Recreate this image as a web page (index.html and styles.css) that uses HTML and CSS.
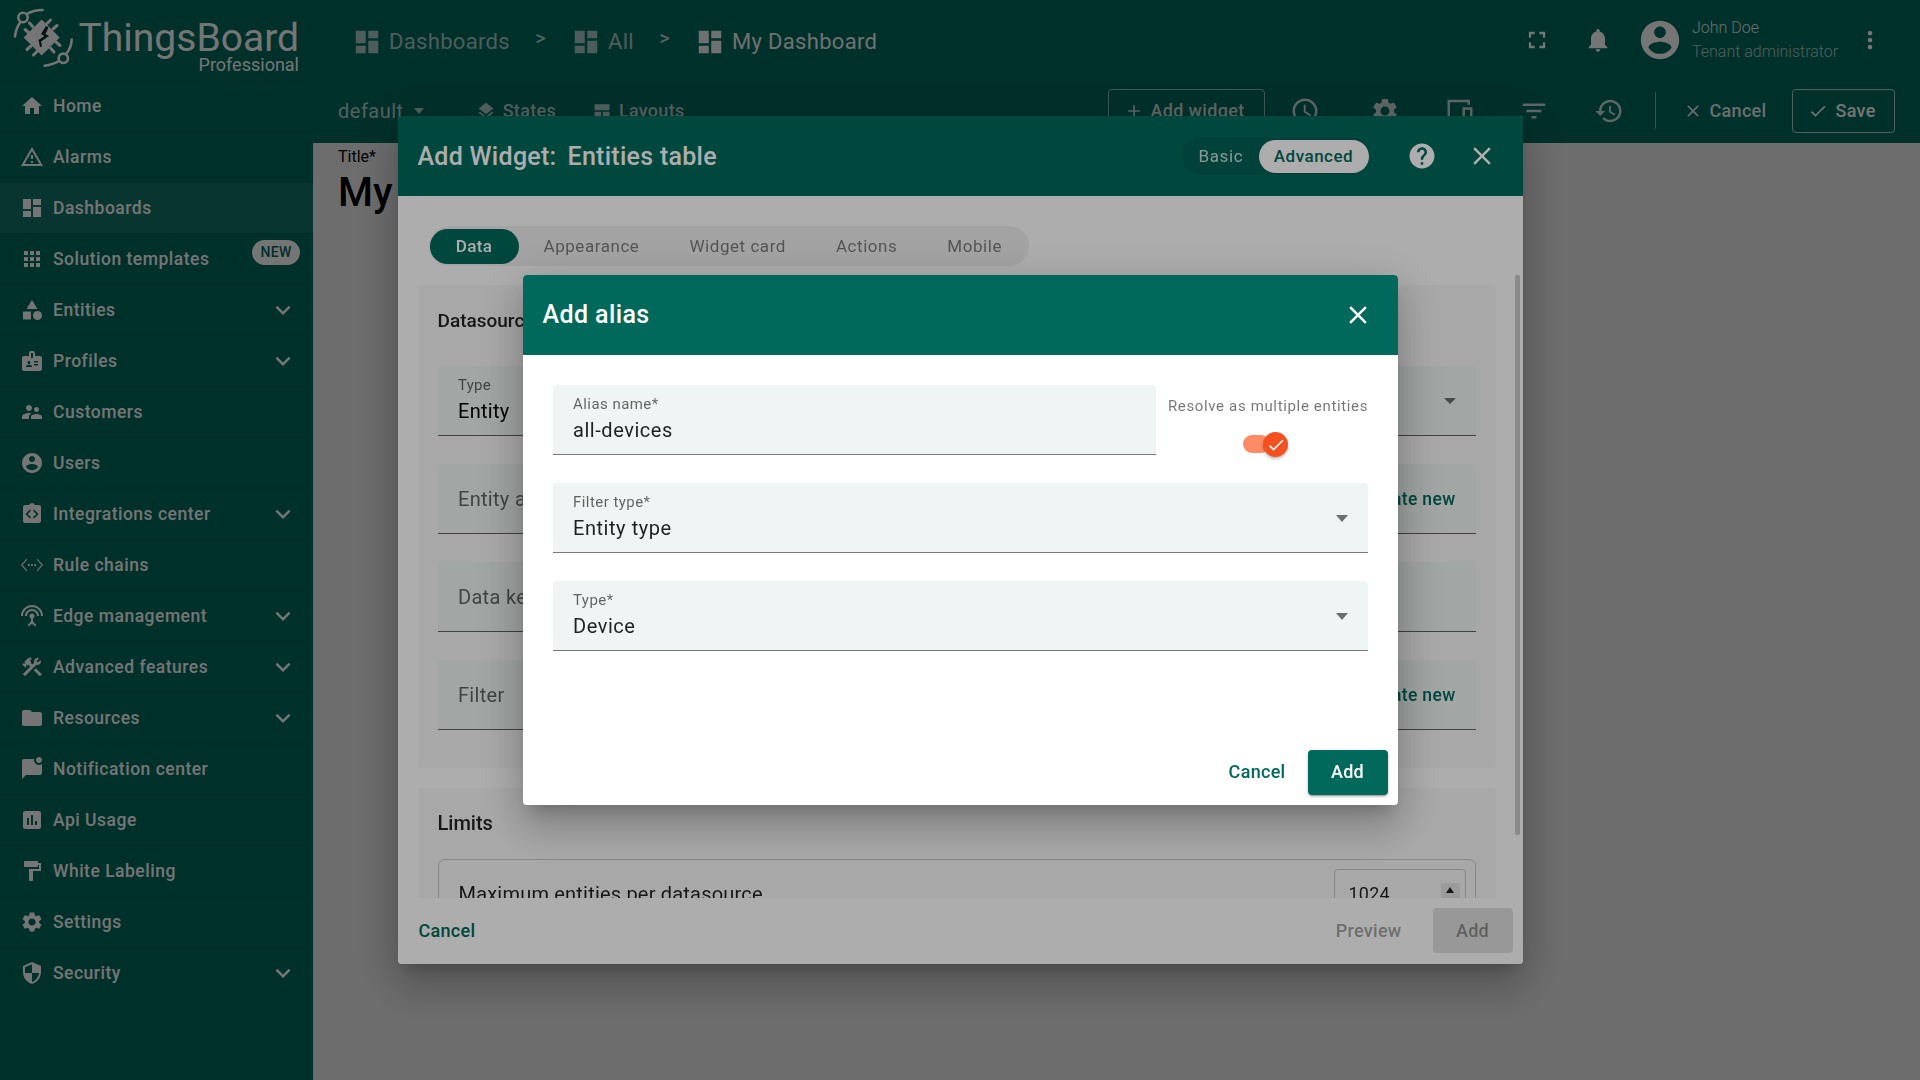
FILE: index.html
```html
<!DOCTYPE html>
<html lang="en">
<head>
<meta charset="utf-8">
<title>ThingsBoard</title>
<link rel="stylesheet" href="styles.css">
</head>
<body>
<svg class="sprite" xmlns="http://www.w3.org/2000/svg">
<symbol id="i-home" viewBox="0 0 24 24"><path d="M10 20v-6h4v6h5v-8h3L12 3 2 12h3v8z"/></symbol>
<symbol id="i-warn" viewBox="0 0 24 24"><path d="M12 5.99L19.53 19H4.47L12 5.99M12 2L1 21h22L12 2zm1 14h-2v2h2v-2zm0-6h-2v4h2v-4z"/></symbol>
<symbol id="i-dash" viewBox="0 0 24 24"><path d="M3 13h8V3H3v10zm0 8h8v-6H3v6zm10 0h8V11h-8v10zm0-18v6h8V3h-8z"/></symbol>
<symbol id="i-grid" viewBox="0 0 24 24"><path d="M4 4h4v4H4zM10 4h4v4h-4zM16 4h4v4h-4zM4 10h4v4H4zM10 10h4v4h-4zM16 10h4v4h-4zM4 16h4v4H4zM10 16h4v4h-4zM16 16h4v4h-4z"/></symbol>
<symbol id="i-cat" viewBox="0 0 24 24"><path d="M12 2l-5.5 9h11z"/><circle cx="17.5" cy="17.5" r="4.5"/><path d="M3 13.5h8v8H3z"/></symbol>
<symbol id="i-badge" viewBox="0 0 24 24"><path d="M20 7h-5V4c0-1.1-.9-2-2-2h-2c-1.1 0-2 .9-2 2v3H4c-1.1 0-2 .9-2 2v11c0 1.1.9 2 2 2h16c1.1 0 2-.9 2-2V9c0-1.1-.9-2-2-2zM9 12c.83 0 1.5.67 1.5 1.5S9.83 15 9 15s-1.5-.67-1.5-1.5S8.17 12 9 12zm3 6H6v-.75c0-1 2-1.5 3-1.5s3 .5 3 1.5V18zm1-9h-2V4h2v5zm5 7.5h-4V15h4v1.5zm0-3h-4V12h4v1.5z"/></symbol>
<symbol id="i-people" viewBox="0 0 24 24"><path d="M16.5 12c1.38 0 2.49-1.12 2.49-2.5S17.88 7 16.5 7 14 8.12 14 9.5s1.12 2.5 2.5 2.5zM9 11c1.66 0 2.99-1.34 2.99-3S10.66 5 9 5 6 6.34 6 8s1.34 3 3 3zm7.5 3c-1.83 0-5.5.92-5.5 2.75V19h11v-2.25c0-1.83-3.67-2.75-5.5-2.75zM9 13c-2.33 0-7 1.17-7 3.5V19h7v-2.25c0-.85.33-2.34 2.37-3.47C10.5 13.1 9.66 13 9 13z"/></symbol>
<symbol id="i-user" viewBox="0 0 24 24"><path d="M12 2C6.48 2 2 6.48 2 12s4.48 10 10 10 10-4.48 10-10S17.52 2 12 2zm0 3c1.66 0 3 1.34 3 3s-1.34 3-3 3-3-1.34-3-3 1.34-3 3-3zm0 14.2c-2.5 0-4.71-1.28-6-3.22.03-1.99 4-3.08 6-3.08 1.99 0 5.97 1.09 6 3.08-1.29 1.94-3.5 3.22-6 3.22z"/></symbol>
<symbol id="i-integ" viewBox="0 0 24 24"><path fill-rule="evenodd" d="M5 3h4.2C9.6 1.8 10.7 1 12 1s2.400.8 2.800 2H19c1.100 0 2 .9 2 2v14c0 1.100-.9 2-2 2H5c-1.100 0-2-.9-2-2V5c0-1.100.9-2 2-2zM11 8.700L9.900 7.600 5.500 12l4.400 4.400 1.100-1.100L7.700 12zM13 8.700l1.100-1.100 4.400 4.400-4.400 4.400-1.100-1.100 3.300-3.300z"/></symbol>
<symbol id="i-eth" viewBox="0 0 24 24"><path d="M7.300 6.400L6.500 5.700 1 12l5.500 6.300.8-.7L2.500 12zM8 11h1.600v2H8zM11.200 11h1.600v2h-1.600zM14.400 11H16v2h-1.600zM16.700 6.400l.8-.7L23 12l-5.500 6.300-.8-.7 4.800-5.600z"/></symbol>
<symbol id="i-ant" viewBox="0 0 24 24"><path d="M12 5c-3.870 0-7 3.130-7 7h2c0-2.760 2.240-5 5-5s5 2.240 5 5h2c0-3.870-3.130-7-7-7zm1 9.290c.88-.39 1.500-1.260 1.500-2.290 0-1.380-1.120-2.500-2.500-2.500S9.500 10.620 9.500 12c0 1.020.62 1.900 1.500 2.290v3.300L7.590 21 9 22.410l3-3 3 3L16.410 21 13 17.590v-3.300zM12 1C5.930 1 1 5.930 1 12h2c0-4.970 4.030-9 9-9s9 4.030 9 9h2c0-6.070-4.930-11-11-11z"/></symbol>
<symbol id="i-tools" viewBox="0 0 24 24"><path d="M13.780 15.300l6 6 2.110-2.160-6-6zM17.500 10c1.930 0 3.500-1.570 3.500-3.500 0-.58-.16-1.120-.41-1.600l-2.700 2.700-1.490-1.490 2.700-2.700c-.48-.25-1.020-.41-1.600-.41C15.570 3 14 4.570 14 6.500c0 .41.08.8.21 1.160l-1.850 1.850-1.780-1.780.71-.71-1.410-1.410L12 3.490c-1.170-1.170-3.070-1.170-4.240 0L4.220 7.030l1.410 1.410H2.810l-.71.71 3.540 3.540.71-.71V9.150l1.410 1.410.71-.71 1.780 1.780-7.410 7.410 2.120 2.120L16.340 9.790c.36.13.75.21 1.160.21z"/></symbol>
<symbol id="i-folder" viewBox="0 0 24 24"><path d="M10 4H4c-1.100 0-1.990.9-1.990 2L2 18c0 1.100.9 2 2 2h16c1.100 0 2-.9 2-2V8c0-1.100-.9-2-2-2h-8l-2-2z"/></symbol>
<symbol id="i-chat" viewBox="0 0 24 24"><path d="M22 6.980V16c0 1.100-.9 2-2 2H6l-4 4V4c0-1.100.9-2 2-2h10.100c-.06.32-.1.66-.1 1 0 2.760 2.240 5 5 5 1.130 0 2.160-.39 3-1.020zM16 3c0 1.660 1.340 3 3 3s3-1.340 3-3-1.340-3-3-3-3 1.340-3 3z"/></symbol>
<symbol id="i-chart" viewBox="0 0 24 24"><path d="M19 3H5c-1.100 0-2 .9-2 2v14c0 1.100.9 2 2 2h14c1.100 0 2-.9 2-2V5c0-1.100-.9-2-2-2zM9 17H7v-7h2v7zm4 0h-2V7h2v10zm4 0h-2v-4h2v4z"/></symbol>
<symbol id="i-paint" viewBox="0 0 24 24"><path d="M18 4V3c0-.55-.45-1-1-1H5c-.55 0-1 .45-1 1v4c0 .55.45 1 1 1h12c.55 0 1-.45 1-1V6h1v4H9v11c0 .55.45 1 1 1h2c.55 0 1-.45 1-1v-9h8V4h-3z"/></symbol>
<symbol id="i-gear" viewBox="0 0 24 24"><path d="M19.140 12.940c.04-.3.06-.61.06-.94 0-.32-.02-.64-.07-.94l2.030-1.580c.18-.14.23-.41.12-.61l-1.920-3.320c-.12-.22-.37-.29-.59-.22l-2.390.96c-.5-.38-1.030-.7-1.620-.94l-.36-2.540c-.04-.24-.24-.41-.48-.41h-3.840c-.24 0-.43.17-.47.41l-.36 2.540c-.59.24-1.130.57-1.620.94l-2.390-.96c-.22-.08-.47 0-.59.22L2.740 8.870c-.12.21-.08.47.12.61l2.030 1.580c-.05.3-.09.63-.09.94s.02.64.07.94l-2.030 1.580c-.18.14-.23.41-.12.61l1.920 3.320c.12.22.37.29.59.22l2.390-.96c.5.38 1.030.7 1.620.94l.36 2.540c.05.24.24.41.48.41h3.840c.24 0 .44-.17.47-.41l.36-2.540c.59-.24 1.130-.56 1.620-.94l2.390.96c.22.08.47 0 .59-.22l1.920-3.320c.12-.22.07-.47-.12-.61l-2.010-1.580zM12 15.600c-1.980 0-3.600-1.620-3.600-3.600s1.620-3.600 3.600-3.600 3.600 1.620 3.600 3.600-1.620 3.600-3.600 3.600z"/></symbol>
<symbol id="i-shield" viewBox="0 0 24 24"><path d="M12 1L3 5v6c0 5.550 3.840 10.740 9 12 5.160-1.260 9-6.450 9-12V5l-9-4zm0 10.990h7c-.53 4.120-3.280 7.790-7 8.940V12H5V6.300l7-3.110v8.800z"/></symbol>
<symbol id="i-more" viewBox="0 0 24 24"><path d="M16.590 8.590L12 13.170 7.410 8.590 6 10l6 6 6-6z"/></symbol>
<symbol id="i-full" viewBox="0 0 24 24"><path d="M7 14H5v5h5v-2H7v-3zm-2-4h2V7h3V5H5v5zm12 7h-3v2h5v-5h-2v3zM14 5v2h3v3h2V5h-5z"/></symbol>
<symbol id="i-bell" viewBox="0 0 24 24"><path d="M12 22c1.100 0 2-.9 2-2h-4c0 1.100.89 2 2 2zm6-6v-5c0-3.070-1.640-5.640-4.500-6.320V4c0-.83-.67-1.500-1.500-1.500s-1.500.67-1.500 1.500v.68C7.630 5.360 6 7.920 6 11v5l-2 2v1h16v-1l-2-2z"/></symbol>
<symbol id="i-vert" viewBox="0 0 24 24"><path d="M12 8c1.100 0 2-.9 2-2s-.9-2-2-2-2 .9-2 2 .9 2 2 2zm0 2c-1.100 0-2 .9-2 2s.9 2 2 2 2-.9 2-2-.9-2-2-2zm0 6c-1.100 0-2 .9-2 2s.9 2 2 2 2-.9 2-2-.9-2-2-2z"/></symbol>
<symbol id="i-layers" viewBox="0 0 24 24"><path d="M11.990 18.540l-7.370-5.730L3 14.070l9 7 9-7-1.630-1.270-7.380 5.740zM12 16l7.360-5.730L21 9l-9-7-9 7 1.630 1.270L12 16z"/></symbol>
<symbol id="i-layout" viewBox="0 0 24 24"><path d="M3 4h18v7H3zM3 13h8v7H3zM13 13h8v7h-8z"/></symbol>
<symbol id="i-add" viewBox="0 0 24 24"><path d="M19 13h-6v6h-2v-6H5v-2h6V5h2v6h6v2z"/></symbol>
<symbol id="i-clock" viewBox="0 0 24 24"><path d="M11.990 2C6.470 2 2 6.480 2 12s4.470 10 9.990 10C17.520 22 22 17.520 22 12S17.520 2 11.990 2zM12 20c-4.420 0-8-3.580-8-8s3.580-8 8-8 8 3.580 8 8-3.580 8-8 8zm.5-13H11v6l5.250 3.150.75-1.230-4.500-2.670z"/></symbol>
<symbol id="i-screen" viewBox="0 0 24 24"><path fill-rule="evenodd" d="M2 3h18v4h-2V5H4v16H2zM14 9h8v12h-8zM16 11v8h4v-8zM8 21l2.500-5 2 3v2z"/></symbol>
<symbol id="i-filter" viewBox="0 0 24 24"><path d="M10 18h4v-2h-4v2zM3 6v2h18V6H3zm3 7h12v-2H6v2z"/></symbol>
<symbol id="i-history" viewBox="0 0 24 24"><path d="M13 3c-4.970 0-9 4.030-9 9H1l3.890 3.890.07.14L9 12H6c0-3.870 3.130-7 7-7s7 3.130 7 7-3.130 7-7 7c-1.930 0-3.680-.79-4.940-2.060l-1.420 1.420C8.270 19.990 10.510 21 13 21c4.970 0 9-4.030 9-9s-4.030-9-9-9zm-1 5v5l4.280 2.540.72-1.210-3.500-2.080V8H12z"/></symbol>
<symbol id="i-close" viewBox="0 0 24 24"><path d="M19 6.410L17.590 5 12 10.590 6.410 5 5 6.410 10.590 12 5 17.590 6.410 19 12 13.410 17.590 19 19 17.590 13.410 12z"/></symbol>
<symbol id="i-check" viewBox="0 0 24 24"><path d="M9 16.170L4.830 12l-1.420 1.410L9 19 21 7l-1.410-1.410z"/></symbol>
<symbol id="i-help" viewBox="0 0 24 24"><path d="M12 2C6.480 2 2 6.480 2 12s4.480 10 10 10 10-4.480 10-10S17.520 2 12 2zm1 17h-2v-2h2v2zm2.070-7.750l-.9.92C13.450 12.900 13 13.500 13 15h-2v-.5c0-1.100.45-2.100 1.170-2.830l1.240-1.260c.37-.36.59-.86.59-1.410 0-1.100-.9-2-2-2s-2 .9-2 2H8c0-2.210 1.790-4 4-4s4 1.790 4 4c0 .88-.36 1.680-.93 2.250z"/></symbol>
</svg>

<div class="app">
  <aside class="sidebar">
    <div class="brand">
      <svg class="logo" viewBox="0 0 80 80" aria-hidden="true">
        <g fill="none" stroke="currentColor" stroke-width="2.600" stroke-linecap="round">
          <circle cx="23" cy="17.500" r="4.700"/>
          <path d="M27 14C31 11.500 37 10 42.500 10M20.500 22C17.500 26 15.500 31 15 36.500"/>
          <circle cx="63.300" cy="58.300" r="4.700"/>
          <path d="M59 61C55 63.500 50 65 44.500 65.700M66 54C69.500 50 71.500 45 71.700 39.500"/>
          <path stroke-width="3" d="M29 33l-4-3.500M33 27l-3.500-4M47 23.500l3.500-3.500M53 29l4-3.500M56 42l4 3.500M50.500 48l3.500 4M37 51.500L33.500 55M31 46l-4 3.500"/>
        </g>
        <path fill="currentColor" d="M41.700 19.500l18 18-18 18-18-18z"/>
        <path fill="#00302a" d="M46 26l-5 8 3.500 2-6 4 1.500 7 2-.5-1-5 8-5.500-3.500-2 3-6.500z"/>
      </svg>
      <div class="brand-text">
        <span class="brand-name">ThingsBoard</span>
        <span class="brand-sub">Professional</span>
      </div>
    </div>
    <nav class="nav">
      <a class="nav-item"><svg class="nav-icon"><use href="#i-home"/></svg><span>Home</span></a>
      <a class="nav-item"><svg class="nav-icon"><use href="#i-warn"/></svg><span>Alarms</span></a>
      <a class="nav-item is-active"><svg class="nav-icon"><use href="#i-dash"/></svg><span>Dashboards</span></a>
      <a class="nav-item"><svg class="nav-icon"><use href="#i-grid"/></svg><span>Solution templates</span><b class="new-badge">NEW</b></a>
      <a class="nav-item"><svg class="nav-icon"><use href="#i-cat"/></svg><span>Entities</span><svg class="nav-chev"><use href="#i-more"/></svg></a>
      <a class="nav-item"><svg class="nav-icon"><use href="#i-badge"/></svg><span>Profiles</span><svg class="nav-chev"><use href="#i-more"/></svg></a>
      <a class="nav-item"><svg class="nav-icon"><use href="#i-people"/></svg><span>Customers</span></a>
      <a class="nav-item"><svg class="nav-icon"><use href="#i-user"/></svg><span>Users</span></a>
      <a class="nav-item"><svg class="nav-icon"><use href="#i-integ"/></svg><span>Integrations center</span><svg class="nav-chev"><use href="#i-more"/></svg></a>
      <a class="nav-item"><svg class="nav-icon"><use href="#i-eth"/></svg><span>Rule chains</span></a>
      <a class="nav-item"><svg class="nav-icon"><use href="#i-ant"/></svg><span>Edge management</span><svg class="nav-chev"><use href="#i-more"/></svg></a>
      <a class="nav-item"><svg class="nav-icon"><use href="#i-tools"/></svg><span>Advanced features</span><svg class="nav-chev"><use href="#i-more"/></svg></a>
      <a class="nav-item"><svg class="nav-icon"><use href="#i-folder"/></svg><span>Resources</span><svg class="nav-chev"><use href="#i-more"/></svg></a>
      <a class="nav-item"><svg class="nav-icon"><use href="#i-chat"/></svg><span>Notification center</span></a>
      <a class="nav-item"><svg class="nav-icon"><use href="#i-chart"/></svg><span>Api Usage</span></a>
      <a class="nav-item"><svg class="nav-icon"><use href="#i-paint"/></svg><span>White Labeling</span></a>
      <a class="nav-item"><svg class="nav-icon"><use href="#i-gear"/></svg><span>Settings</span></a>
      <a class="nav-item"><svg class="nav-icon"><use href="#i-shield"/></svg><span>Security</span><svg class="nav-chev"><use href="#i-more"/></svg></a>
    </nav>
  </aside>

  <main class="main">
    <header class="toolbar">
      <div class="top-row">
        <div class="crumb"><svg class="crumb-icon"><use href="#i-dash"/></svg><span>Dashboards</span></div>
        <span class="crumb-sep">&gt;</span>
        <div class="crumb"><svg class="crumb-icon"><use href="#i-dash"/></svg><span>All</span></div>
        <span class="crumb-sep">&gt;</span>
        <div class="crumb is-last"><svg class="crumb-icon"><use href="#i-dash"/></svg><span>My Dashboard</span></div>
        <div class="top-actions">
          <svg class="top-icon full"><use href="#i-full"/></svg>
          <svg class="top-icon bell"><use href="#i-bell"/></svg>
          <svg class="avatar"><use href="#i-user"/></svg>
          <div class="user"><span>John Doe</span><span>Tenant administrator</span></div>
          <svg class="top-icon kebab"><use href="#i-vert"/></svg>
        </div>
      </div>
      <div class="sub-row">
        <span class="state-name">default</span><span class="caret dim"></span>
        <span class="sub-link states"><svg class="sub-icon"><use href="#i-layers"/></svg>States</span>
        <span class="sub-link layouts"><svg class="sub-icon"><use href="#i-layout"/></svg>Layouts</span>
        <button class="stroked add-widget"><svg class="sub-icon"><use href="#i-add"/></svg>Add widget</button>
        <svg class="tool-icon clock"><use href="#i-clock"/></svg>
        <svg class="tool-icon gear"><use href="#i-gear"/></svg>
        <svg class="tool-icon"><use href="#i-screen"/></svg>
        <svg class="tool-icon filter"><use href="#i-filter"/></svg>
        <svg class="tool-icon"><use href="#i-history"/></svg>
        <span class="vdiv"></span>
        <span class="sub-link cancel"><svg class="sub-icon"><use href="#i-close"/></svg>Cancel</span>
        <button class="stroked save"><svg class="sub-icon"><use href="#i-check"/></svg>Save</button>
      </div>
    </header>
    <section class="canvas">
      <div class="title-label">Title*</div>
      <div class="title-value">My Dashboard</div>
    </section>
  </main>
</div>

<div class="backdrop">
  <section class="dialog widget-dialog">
    <header class="dialog-head">
      <h2 class="widget-title">Add Widget:<span>Entities table</span></h2>
      <div class="mode-toggle"><span class="mode">Basic</span><span class="mode is-on">Advanced</span></div>
      <svg class="head-help"><use href="#i-help"/></svg>
      <svg class="head-close"><use href="#i-close"/></svg>
    </header>
    <div class="widget-body">
      <div class="scrollbar"></div>
      <div class="tabs">
        <span class="tab is-on">Data</span><span class="tab">Appearance</span><span class="tab">Widget card</span><span class="tab">Actions</span><span class="tab">Mobile</span>
      </div>
      <div class="card">
        <h3 class="card-title">Datasources</h3>
        <div class="bg-field"><small>Type</small><em>Entity</em><i class="caret"></i></div>
        <div class="bg-field single"><em class="muted">Entity alias</em><strong>Create new</strong></div>
        <div class="bg-field single"><em class="muted">Data keys</em></div>
        <div class="bg-field single"><em class="muted">Filter</em><strong>Create new</strong></div>
      </div>
      <div class="card limits">
        <h3 class="card-title">Limits</h3>
        <div class="limit-box">
          <span>Maximum entities per datasource</span>
          <div class="num-input">1024<i class="spin"></i></div>
        </div>
      </div>
    </div>
    <footer class="widget-foot">
      <span class="link-strong">Cancel</span>
      <span class="link-off">Preview</span>
      <span class="btn-off">Add</span>
    </footer>
  </section>
</div>

<div class="backdrop">
  <section class="dialog alias-dialog">
    <header class="alias-head">
      <h2>Add alias</h2>
      <svg class="alias-close"><use href="#i-close"/></svg>
    </header>
    <div class="alias-body">
      <div class="alias-row">
        <label class="field grow"><small>Alias name*</small><span>all-devices</span></label>
        <div class="resolve">
          <span class="resolve-label">Resolve as multiple entities</span>
          <div class="switch"><i class="switch-thumb"><svg><use href="#i-check"/></svg></i></div>
        </div>
      </div>
      <label class="field"><small>Filter type*</small><span>Entity type</span><i class="caret"></i></label>
      <label class="field"><small>Type*</small><span>Device</span><i class="caret"></i></label>
    </div>
    <footer class="alias-foot">
      <span class="alias-cancel">Cancel</span>
      <span class="alias-add">Add</span>
    </footer>
  </section>
</div>
</body>
</html>
```
FILE: styles.css
```css
* { box-sizing: border-box; }
html, body { margin: 0; height: 100%; overflow: hidden; }
body { font-family: Roboto, "Liberation Sans", sans-serif; color: #000; background: #eee; }
.sprite { display: none; }
svg { fill: currentColor; display: block; flex: none; }
h2, h3 { margin: 0; }

.app { display: flex; height: 1080px; }
.sidebar { width: 313px; flex: none; background: #00695c; color: #fff; }
.brand { height: 80px; display: flex; }
.logo { width: 80px; height: 80px; }
.brand-text { display: flex; flex-direction: column; align-items: flex-end; width: 219px; }
.brand-name { font-size: 39px; line-height: 36px; margin-top: 20px; white-space: nowrap; }
.brand-sub { font-size: 18px; line-height: 18px; }
.nav-item { position: relative; height: 51px; display: flex; align-items: center; padding-left: 20px; border-top: 1px solid rgba(0,0,0,.08); font-size: 17.500px; font-weight: 500; letter-spacing: .5px; }
.nav-item.is-active { background: rgba(255,255,255,.08); }
.nav-icon { width: 24px; height: 24px; margin-right: 9px; }
.nav-chev { width: 30px; height: 30px; position: absolute; left: 268px; top: 10px; }
.new-badge { position: absolute; left: 252px; top: 6px; width: 48px; height: 25px; border-radius: 13px; background: #fff; color: #00695c; font-size: 14px; font-weight: 500; line-height: 25px; text-align: center; letter-spacing: .3px; }

.main { flex: 1; display: flex; flex-direction: column; min-width: 0; }
.toolbar { height: 143px; flex: none; background: #00695c; color: #fff; }
.top-row { height: 80px; display: flex; align-items: center; padding-left: 39px; }
.crumb { display: flex; align-items: center; opacity: .65; font-size: 22px; letter-spacing: .32px; margin-top: 3px; }
.crumb.is-last { opacity: .95; }
.crumb-icon { width: 30px; height: 30px; margin-right: 7px; }
.crumb-sep { opacity: .8; font-size: 20px; width: 61px; text-align: center; margin-top: -4px; }
.top-actions { margin-left: auto; display: flex; align-items: center; }
.top-icon { width: 28px; height: 28px; margin-right: 32px; }
.top-icon.full { margin-right: 33px; }
.avatar { width: 46px; height: 46px; margin-left: -6.500px; margin-right: 9px; }
.user { display: flex; flex-direction: column; font-size: 16px; font-weight: 300; line-height: 24px; width: 164px; opacity: .9; }
.user span + span { opacity: .75; }
.kebab { margin-right: 36px; }
.sub-row { height: 63px; display: flex; align-items: center; padding-left: 25px; margin-top: -1px; }
.state-name { font-size: 20px; letter-spacing: .5px; opacity: .7; }
.caret { display: block; width: 0; height: 0; border: 5.500px solid transparent; border-top: 6px solid currentColor; border-bottom: 0; }
.caret.dim { margin-left: 10px; opacity: .7; }
.sub-link { display: flex; align-items: center; font-size: 18px; font-weight: 500; letter-spacing: .3px; opacity: .7; }
.sub-icon { width: 20px; height: 20px; margin-right: 7px; }
.states { margin-left: 52px; }
.layouts { margin-left: 36px; }
.stroked { display: flex; align-items: center; height: 44px; background: none; color: #fff; font: 500 18px Roboto, sans-serif; letter-spacing: .35px; border: 1px solid rgba(255,255,255,.7); border-radius: 4px; }
.add-widget { width: 157px; padding: 0 0 0 15px; margin-left: 423px; opacity: .8; }
.tool-icon { width: 30px; height: 30px; margin-left: 45px; opacity: .8; }
.clock { margin-left: 25px; }
.gear { margin-left: 50px; }
.filter { margin-left: 44px; }
.vdiv { width: 1px; height: 37px; background: rgba(255,255,255,.5); margin-left: 31px; }
.cancel { margin-left: 27px; opacity: .9; }
.save { width: 103px; padding: 0 0 0 15px; margin-left: 26px; }
.canvas { flex: 1; padding: 5px 0 0 25px; position: relative; }
.title-label { font-size: 16px; line-height: 18px; }
.title-value { font-size: 40px; font-weight: 500; line-height: 48px; margin-top: 3px; }

.backdrop { position: fixed; inset: 0; background: rgba(0,0,0,.32); display: flex; align-items: center; justify-content: center; }
.dialog { background: #fff; border-radius: 4px; overflow: hidden; display: flex; flex-direction: column; box-shadow: 0 11px 15px -7px rgba(0,0,0,.2), 0 24px 38px 3px rgba(0,0,0,.14), 0 9px 46px 8px rgba(0,0,0,.12); }

.widget-dialog { width: 1125px; height: 848px; }
.dialog-head { height: 80px; flex: none; background: #00695c; color: #fff; display: flex; align-items: center; padding: 0 0 0 20px; }
.widget-title { font-size: 25px; font-weight: 500; letter-spacing: .28px; white-space: nowrap; flex: 1; }
.widget-title span { margin-left: 11px; }
.mode-toggle { display: flex; align-items: center; flex: none; height: 38px; width: 187px; border-radius: 19px; background: rgba(0,0,0,.08); }
.mode { font-size: 17px; font-weight: 400; letter-spacing: .6px; padding: 0 0 0 17px; opacity: .8; }
.mode.is-on { flex: none; width: 110px; height: 33px; background: #fff; color: #00695c; border-radius: 17px; line-height: 33px; opacity: 1; text-align: center; padding: 0; margin-left: auto; font-weight: 500; letter-spacing: .5px; }
.head-help { width: 30px; height: 30px; margin-left: 38px; }
.head-close { width: 30px; height: 30px; margin: 0 26px 0 30px; }
.widget-body { overflow: hidden; position: relative; padding: 30px 27px 0 20px; height: 702px; flex: none; }
.scrollbar { position: absolute; right: 3px; top: 79px; width: 5px; height: 560px; border-radius: 2px; background: rgba(0,0,0,.2); }
.tabs { display: flex; align-items: center; margin-left: 11px; width: 600px; height: 40px; padding-left: 1px; border-radius: 20px; background: rgba(0,0,0,.06); font-size: 17px; font-weight: 400; letter-spacing: .55px; color: rgba(0,0,0,.5); }
.tab { padding: 0 25px; line-height: 35px; white-space: nowrap; }
.tab.is-on { flex: none; width: 89px; background: #00695c; color: #fff; border-radius: 18px; text-align: center; padding: 0; font-weight: 500; letter-spacing: .35px; }
.card { background: rgba(0,0,0,.03); border-radius: 4px; padding: 0 20px; margin-top: 19px; height: 483px; }
.card-title { font-size: 19px; font-weight: 500; line-height: 24px; padding-top: 24px; height: 81px; color: rgba(0,0,0,.87); }
.bg-field { position: relative; height: 70px; margin-bottom: 28px; background: #eff5f4; border-bottom: 1px solid rgba(0,0,0,.6); border-radius: 4px 4px 0 0; padding: 10px 20.500px 0; display: flex; flex-direction: column; }
.bg-field small { font-size: 15px; color: rgba(0,0,0,.6); line-height: 18px; letter-spacing: .25px; }
.bg-field em { font-style: normal; font-size: 20px; line-height: 32px; letter-spacing: .3px; margin-top: 1px; }
.bg-field .caret { position: absolute; right: 20px; top: 32px; color: rgba(0,0,0,.55); border-width: 6px 6.500px 0; }
.bg-field.single { justify-content: center; padding-top: 1px; }
.bg-field em.muted { color: rgba(0,0,0,.6); margin-top: 0; }
.bg-field strong { position: absolute; right: 20px; top: 25px; font-size: 17.500px; font-weight: 500; color: #00695c; letter-spacing: .35px; }
.limits { height: auto; margin-top: 20px; padding-bottom: 30px; }
.limits .card-title { height: 71px; padding-top: 23px; font-size: 20px; }
.limit-box { display: flex; align-items: flex-start; justify-content: space-between; border: 1px solid rgba(0,0,0,.2); border-radius: 7px; padding: 9px 9px 20px 20px; height: 100px; font-size: 20px; letter-spacing: .2px; color: rgba(0,0,0,.87); }
.limit-box span { margin-top: 13px; }
.num-input { position: relative; width: 132px; height: 50px; padding: 13px 0 0 14px; border: 1px solid rgba(0,0,0,.2); border-radius: 4px; font-size: 18px; }
.spin { position: absolute; right: 5px; top: 13px; width: 19px; height: 30px; background: rgba(0,0,0,.08); }
.spin::before { content: ""; position: absolute; left: 5px; top: 4px; border: 4.500px solid transparent; border-bottom: 6px solid #222; border-top: 0; }
.spin::after { content: ""; position: absolute; left: 5px; top: 15px; width: 9px; height: 2px; background: #222; }
.widget-foot { height: 66px; flex: none; display: flex; align-items: center; padding: 0 10px 2px 21px; background: #fff; font-size: 18px; font-weight: 500; letter-spacing: .3px; }
.link-strong { color: #00695c; }
.link-off { margin-left: auto; color: rgba(0,0,0,.38); }
.btn-off { margin-left: 31px; width: 80px; height: 45px; line-height: 45px; text-align: center; background: rgba(0,0,0,.12); color: rgba(0,0,0,.38); border-radius: 4px; }

.alias-dialog { width: 875px; height: 530px; }
.alias-head { height: 80px; flex: none; background: #00695c; color: #fff; display: flex; align-items: center; justify-content: space-between; padding: 0 25px 0 20px; }
.alias-head h2 { font-size: 25px; font-weight: 500; letter-spacing: .4px; padding-bottom: 2px; }
.alias-close { width: 30px; height: 30px; }
.alias-body { flex: 1; padding: 30px 30px 0; display: flex; flex-direction: column; gap: 28px; }
.alias-row { display: flex; }
.field { position: relative; display: flex; flex-direction: column; height: 70px; padding: 10px 20.500px 0; background: #eff5f4; border-bottom: 1px solid rgba(0,0,0,.5); border-radius: 4px 4px 0 0; }
.field.grow { flex: 1; }
.field small { font-size: 15px; line-height: 18px; letter-spacing: .45px; color: rgba(0,0,0,.6); }
.field span { font-size: 20px; line-height: 32px; margin-top: 1px; letter-spacing: .55px; color: rgba(0,0,0,.87); }
.field .caret { position: absolute; right: 20px; top: 32px; color: rgba(0,0,0,.55); border-width: 7px 6.500px 0; }
.resolve { width: 212px; flex: none; display: flex; flex-direction: column; align-items: center; padding-left: 13px; padding-top: 12px; }
.resolve-label { font-size: 15px; letter-spacing: .65px; color: rgba(0,0,0,.54); line-height: 18px; white-space: nowrap; }
.switch { position: relative; width: 27px; height: 18px; margin: 20px 23px 0 0; border-radius: 9px; background: #ff8a65; }
.switch-thumb { position: absolute; left: 20px; top: -3px; width: 25px; height: 25px; border-radius: 50%; background: #f4511e; color: #fff; display: flex; align-items: center; justify-content: center; box-shadow: 0 2px 3px rgba(0,0,0,.25); }
.switch-thumb svg { width: 20px; height: 20px; }
.alias-foot { height: 55px; flex: none; margin-bottom: 5px; display: flex; align-items: center; justify-content: flex-end; padding-right: 10px; font-size: 18px; font-weight: 500; letter-spacing: .3px; }
.alias-cancel { color: #00695c; margin-right: 22px; margin-top: -2px; }
.alias-add { width: 80px; height: 45px; line-height: 43px; text-align: center; color: #fff; background: #00695c; border-radius: 4px; box-shadow: 0 3px 1px -2px rgba(0,0,0,.2), 0 2px 2px rgba(0,0,0,.14), 0 1px 5px rgba(0,0,0,.12); }
```
